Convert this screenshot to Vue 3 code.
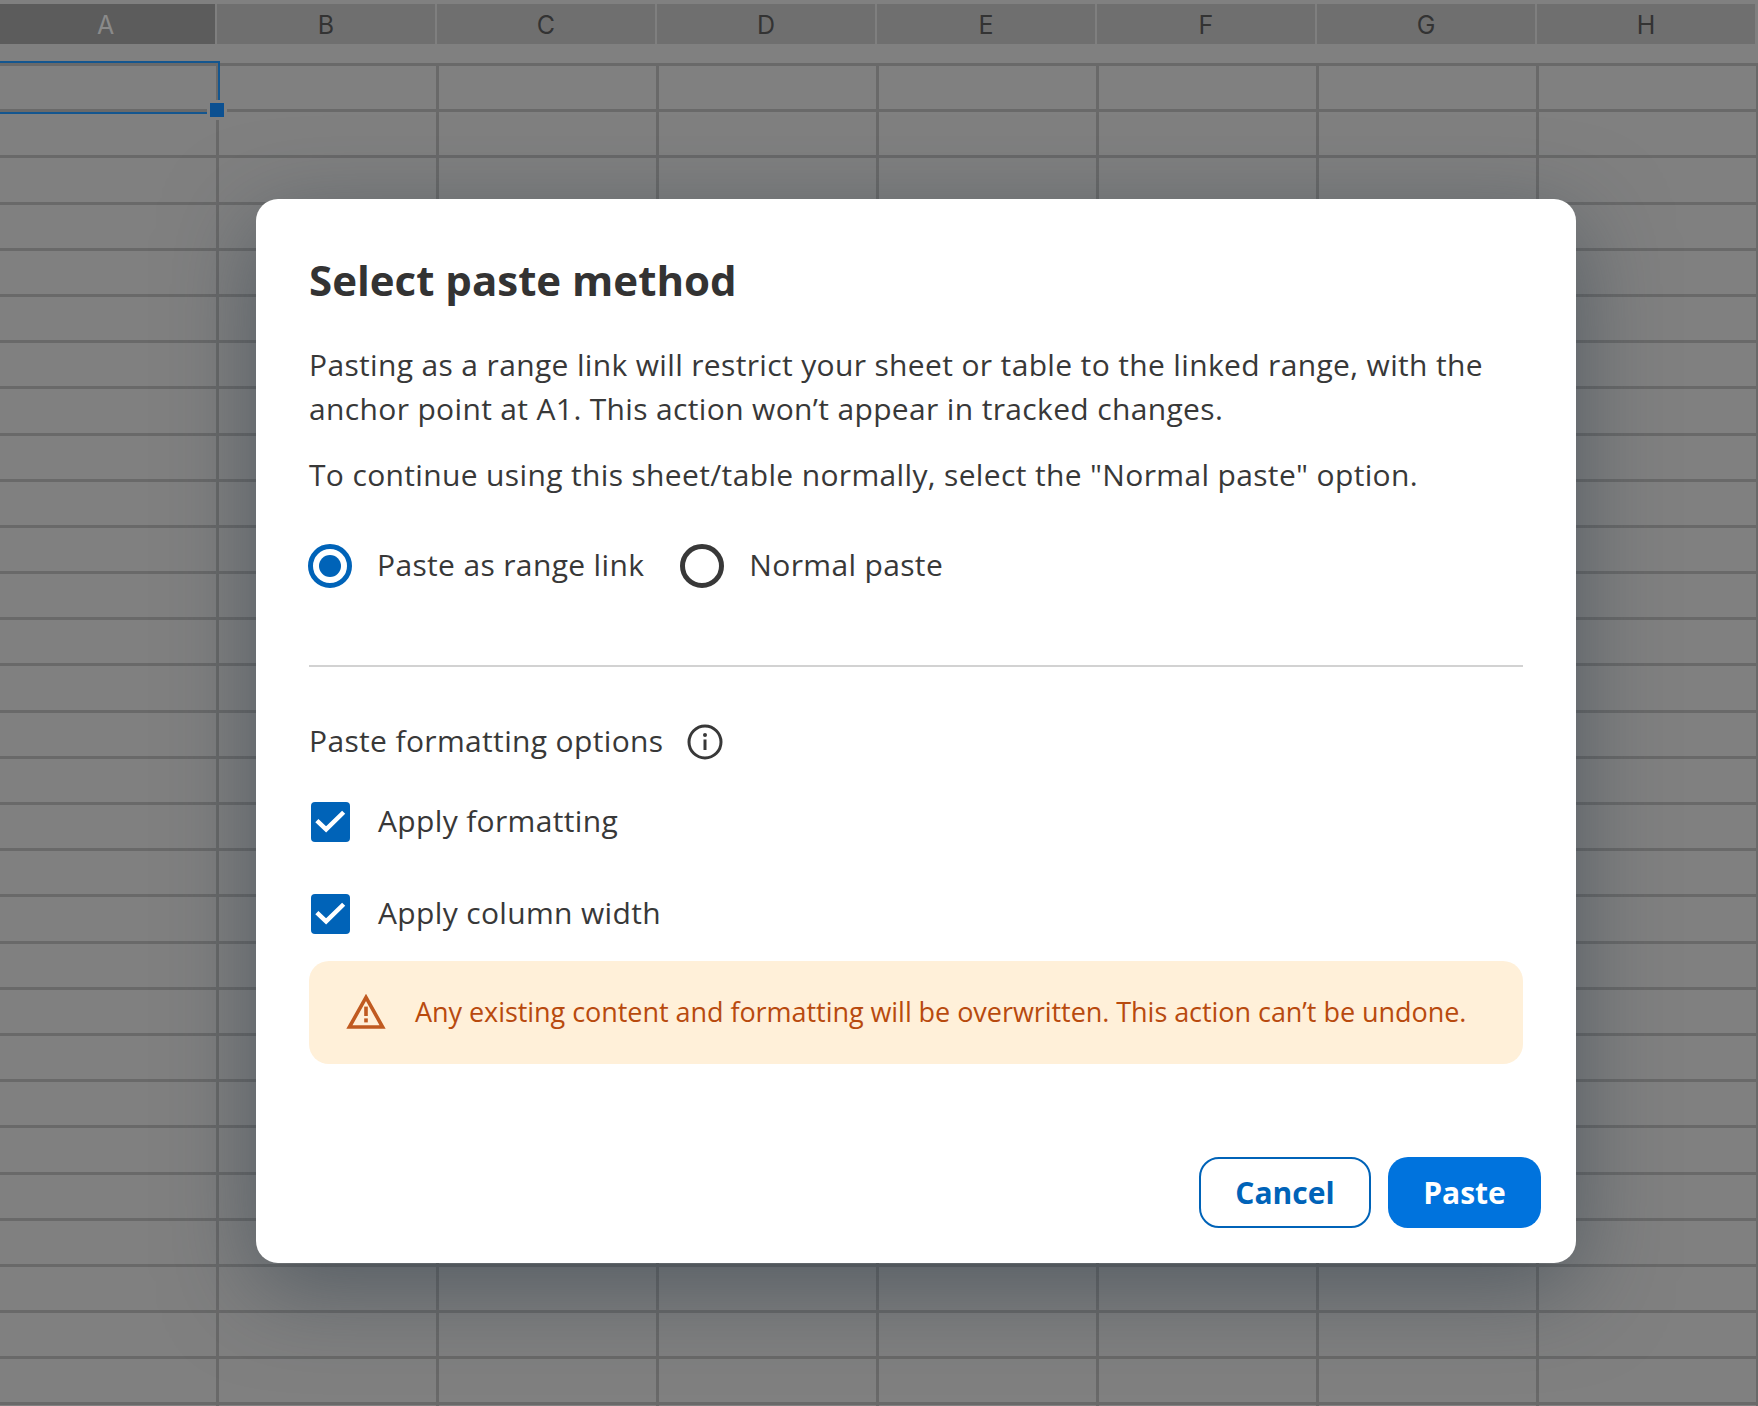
<script setup>
const cols = ['A', 'B', 'C', 'D', 'E', 'F', 'G', 'H']
const rows = Array.from({ length: 30 }, (_, i) => i)
</script>

<template>
  <div class="page">
    <div class="col-head">
      <div v-for="c in cols" :key="c" class="col-cell" :class="{ active: c === 'A' }">{{ c }}</div>
    </div>
    <div class="sheet">
      <div v-for="r in rows" :key="r" class="row">
        <div v-for="c in cols" :key="c" class="cell"></div>
      </div>
    </div>
    <div class="selection"><span class="handle"></span></div>

    <section class="modal">
      <h1 class="title">Select paste method</h1>
      <p class="para">Pasting as a range link will restrict your sheet or table to the linked range, with the anchor point at A1. This action won’t appear in tracked changes.</p>
      <p class="para second">To continue using this sheet/table normally, select the "Normal paste" option.</p>
      <div class="radios">
        <label class="radio-item"><span class="radio on"><span class="dot"></span></span><span class="lift">Paste as range link</span></label>
        <label class="radio-item"><span class="radio"></span><span class="lift">Normal paste</span></label>
      </div>
      <hr class="divider" />
      <div class="opts-head">
        <span class="lift">Paste formatting options</span>
        <svg class="info" viewBox="0 0 36 36" fill="none">
          <circle cx="18" cy="18" r="16" stroke="#383838" stroke-width="3" />
          <rect x="16.5" y="15.5" width="3" height="10.5" fill="#383838" />
          <circle cx="18" cy="11" r="2" fill="#383838" />
        </svg>
      </div>
      <div class="check-row first">
        <span class="check"><svg viewBox="0 0 40 40" fill="none"><path d="M6 18.5 L15.5 27.5 L33.5 10" stroke="#fff" stroke-width="4.6" /></svg></span>
        <span class="lift">Apply formatting</span>
      </div>
      <div class="check-row">
        <span class="check"><svg viewBox="0 0 40 40" fill="none"><path d="M6 18.5 L15.5 27.5 L33.5 10" stroke="#fff" stroke-width="4.6" /></svg></span>
        <span class="lift">Apply column width</span>
      </div>
      <div class="warning">
        <svg class="warn-icon" viewBox="0 0 40 35" fill="none">
          <path d="M20 3.4 L36.6 33 H3.4 Z" stroke="#c05a20" stroke-width="3.6" />
          <rect x="18.2" y="12.6" width="3.6" height="9.4" fill="#c05a20" />
          <rect x="18.2" y="24.4" width="3.6" height="4" fill="#c05a20" />
        </svg>
        <span class="lift">Any existing content and formatting will be overwritten. This action can’t be undone.</span>
      </div>
      <div class="actions">
        <button class="btn outline" type="button">Cancel</button>
        <button class="btn solid" type="button">Paste</button>
      </div>
    </section>
  </div>
</template>

<style>
html, body { margin: 0; background: #808080; }
</style>

<style scoped>
.page {
  position: relative;
  width: 1758px;
  height: 1406px;
  overflow: hidden;
  background: #808080;
  font-family: "Open Sans", sans-serif;
}
.col-head {
  display: flex;
  padding-top: 4px;
  height: 40px;
}
.col-cell {
  flex: 0 0 220px;
  box-sizing: border-box;
  height: 40px;
  padding-top: 2px;
  display: flex;
  align-items: center;
  justify-content: center;
  border-right: 2px solid #7f7f7f;
  background: #6f6f6f;
  color: #333;
  font-family: "Inter", sans-serif;
  font-size: 25px;
}
.col-cell:first-child {
  flex-basis: 217px;
  padding-right: 4px;
}
.col-cell.active { background: #5c5c5c; color: #8a8a8a; }
.sheet { padding-top: 19px; }
.row {
  display: flex;
  height: 46.2px;
  box-sizing: border-box;
  border-top: 3px solid #696969;
}
.cell {
  flex: 0 0 220px;
  box-sizing: border-box;
  border-right: 3px solid #696969;
}
.cell:first-child { flex-basis: 219px; }
.selection {
  position: absolute;
  left: -4px;
  top: 61px;
  width: 224px;
  height: 53px;
  box-sizing: border-box;
  border: 2px solid #14568f;
}
.handle {
  position: absolute;
  right: -6px;
  bottom: -5px;
  width: 14px;
  height: 14px;
  background: #0b5091;
  outline: 3px solid #808080;
}
.modal {
  position: absolute;
  left: 256px;
  top: 199px;
  width: 1320px;
  height: 1064px;
  box-sizing: border-box;
  padding: 50px 53px 0;
  background: #fff;
  border-radius: 22px;
  box-shadow: 0 24px 90px rgba(40, 55, 70, 0.5);
  color: #383838;
  font-size: 30px;
  line-height: 44px;
  letter-spacing: 0.35px;
}
.lift { position: relative; top: -1px; }
.title {
  margin: 0;
  font-size: 42px;
  line-height: 62px;
  font-weight: 700;
  letter-spacing: 0;
  color: #333;
}
.para { margin: 32px 0 0; }
.para.second { margin-top: 22px; }
.radios {
  display: flex;
  gap: 36px;
  margin: 47px 0 0 -1px;
}
.radio-item {
  display: flex;
  align-items: center;
  gap: 25px;
}
.radio {
  box-sizing: border-box;
  width: 44px;
  height: 44px;
  border: 5px solid #383838;
  border-radius: 50%;
  display: flex;
  align-items: center;
  justify-content: center;
}
.radio.on { border-color: #0063b8; }
.dot {
  width: 22px;
  height: 22px;
  border-radius: 50%;
  background: #0063b8;
}
.divider {
  margin: 77px 0 0;
  border: 0;
  height: 2px;
  background: #d2d2d2;
}
.opts-head {
  display: flex;
  align-items: center;
  gap: 24px;
  margin-top: 53px;
}
.info { width: 36px; height: 36px; }
.check-row {
  display: flex;
  align-items: center;
  gap: 28px;
  height: 40px;
  margin-top: 52px;
  padding-left: 2px;
}
.check-row.first { margin-top: 38px; }
.check {
  width: 39px;
  height: 40px;
  border-radius: 4px;
  background: #0063b8;
}
.check svg { display: block; width: 39px; height: 40px; }
.warning {
  display: flex;
  align-items: center;
  gap: 29px;
  height: 103px;
  margin-top: 27px;
  padding-left: 37px;
  background: #fff0d9;
  border-radius: 20px;
  color: #b84a0e;
  font-size: 27px;
  letter-spacing: -0.05px;
}
.warn-icon { width: 40px; height: 35px; position: relative; top: -1px; }
.actions {
  display: flex;
  justify-content: flex-end;
  gap: 17px;
  margin: 93px -18px 0 0;
}
.btn {
  height: 71px;
  border-radius: 20px;
  font: 700 30px "Open Sans", sans-serif;
  padding: 0;
}
.outline {
  width: 172px;
  background: #fff;
  border: 2px solid #0063b8;
  color: #0063b8;
}
.solid {
  width: 153px;
  background: #0073dd;
  border: 0;
  color: #fff;
}
</style>
